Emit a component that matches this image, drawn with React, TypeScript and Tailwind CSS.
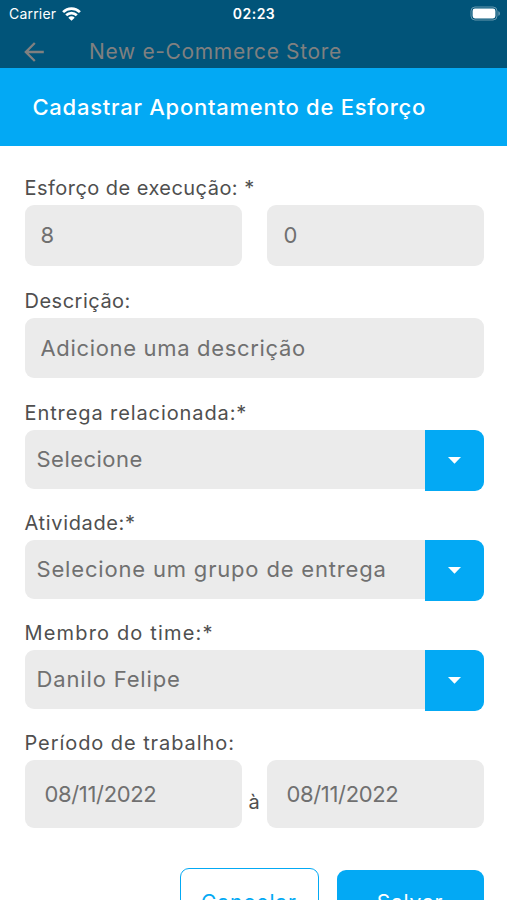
import { useState } from "react";
import type { ReactNode } from "react";

const labelClass = "block h-7 text-[20px] leading-[22px] whitespace-nowrap text-[#4f4f4f]";
const inputClass =
  "block w-full min-w-0 rounded-[9px] bg-[#ebebeb] text-[22px] text-[#707070] placeholder:text-[#707070] outline-none";

interface FieldProps {
  id: string;
  label: string;
  tracking: string;
  children: ReactNode;
}

function Field({ id, label, tracking, children }: FieldProps) {
  return (
    <div>
      <label className={`${labelClass} ${tracking}`} htmlFor={id}>
        {label}
      </label>
      {children}
    </div>
  );
}

interface SelectFieldProps {
  id: string;
  label: string;
  labelTracking: string;
  value: string;
  valueTracking: string;
}

function SelectField({ id, label, labelTracking, value, valueTracking }: SelectFieldProps) {
  return (
    <Field id={id} label={label} tracking={labelTracking}>
      <button id={id} type="button" className="flex h-[61px] w-full items-start text-left">
        <span
          className={`flex h-[58.5px] flex-1 items-center rounded-l-[9px] bg-[#ebebeb] pl-3 text-[22px] whitespace-nowrap text-[#707070] ${valueTracking}`}
        >
          {value}
        </span>
        <span className="flex h-[61px] w-[59px] items-center justify-center rounded-r-[9px] bg-[#03a9f4]">
          <svg width="13" height="7" viewBox="0 0 13 7" fill="white" aria-hidden="true">
            <path d="M0 0h13L6.5 6.8z" />
          </svg>
        </span>
      </button>
    </Field>
  );
}

function StatusBar() {
  return (
    <div className="flex h-[27px] items-center justify-between pr-[6px] pl-[9px] text-white">
      <div className="flex w-[120px] items-center gap-[6px]">
        <span className="text-[14px] tracking-[0.2px]">Carrier</span>
        <svg width="19" height="14" viewBox="0 0 19 14" aria-hidden="true">
          <g fill="none" stroke="white" strokeWidth="2.7">
            <path d="M1.1 5.1a12 12 0 0 1 16.8 0" />
            <path d="M4.2 8.3a7.5 7.5 0 0 1 10.6 0" />
          </g>
          <path d="M6.3 10.7a4.3 4.3 0 0 1 6.4 0L9.5 13.8z" fill="white" />
        </svg>
      </div>
      <span className="pr-0.5 text-[14px] font-semibold tracking-[0.5px]">02:23</span>
      <div className="flex w-[120px] justify-end">
        <svg width="31" height="15" viewBox="0 0 31 15" aria-hidden="true">
          <rect x="1" y="1" width="26" height="13" rx="4" fill="none" stroke="white" strokeOpacity="0.4" />
          <rect x="2.6" y="2.6" width="22.8" height="9.8" rx="2.4" fill="white" />
          <path d="M28.4 5.2c2 .7 2 3.9 0 4.6z" fill="white" fillOpacity="0.45" />
        </svg>
      </div>
    </div>
  );
}

export default function App() {
  const [hours, setHours] = useState("8");
  const [minutes, setMinutes] = useState("0");
  const [description, setDescription] = useState("");
  const [start, setStart] = useState("08/11/2022");
  const [end, setEnd] = useState("08/11/2022");

  return (
    <div className="h-[900px] w-full overflow-hidden bg-white font-['Inter',sans-serif]">
      <header className="h-[68px] bg-[#015479]">
        <StatusBar />
        <div className="flex h-[41px] items-center pt-[9px] pl-6">
          <svg width="20" height="20" viewBox="0 0 20 20" fill="none" stroke="#808080" strokeWidth="2.3" aria-hidden="true">
            <path d="M19.8 10H2M10.8 1L1.8 10l9 9" />
          </svg>
          <span className="ml-[45px] text-[21px] whitespace-nowrap tracking-[0.65px] text-[#808080]">
            New e-Commerce Store
          </span>
        </div>
      </header>

      <h1 className="flex h-[78px] items-center bg-[#03a9f4] pt-px pl-[32.5px] text-[22px] font-medium whitespace-nowrap tracking-[0.74px] text-white">
        Cadastrar Apontamento de Esforço
      </h1>

      <form className="flex flex-col pt-[31px] pr-[23.5px] pl-[24.5px]" onSubmit={(e) => e.preventDefault()}>
        <div className="flex flex-col gap-6">
          <Field id="hours" label="Esforço de execução: *" tracking="tracking-[0.46px]">
            <div className="grid grid-cols-2 gap-[25px]">
              <input
                id="hours"
                className={`${inputClass} h-[60.5px] px-4`}
                value={hours}
                onChange={(e) => setHours(e.target.value)}
              />
              <input
                className={`${inputClass} h-[60.5px] px-[17px]`}
                value={minutes}
                onChange={(e) => setMinutes(e.target.value)}
              />
            </div>
          </Field>

          <Field id="description" label="Descrição:" tracking="tracking-[0.5px]">
            <input
              id="description"
              className={`${inputClass} h-[60.5px] px-4 tracking-[0.67px]`}
              placeholder="Adicione uma descrição"
              value={description}
              onChange={(e) => setDescription(e.target.value)}
            />
          </Field>
        </div>

        <div className="mt-6 flex flex-col gap-[21px]">
          <SelectField
            id="delivery"
            label="Entrega relacionada:*"
            labelTracking="tracking-[0.9px]"
            value="Selecione"
            valueTracking="tracking-[0.48px]"
          />
          <SelectField
            id="activity"
            label="Atividade:*"
            labelTracking="tracking-[0.65px]"
            value="Selecione um grupo de entrega"
            valueTracking="tracking-[0.82px]"
          />
          <SelectField
            id="member"
            label="Membro do time:*"
            labelTracking="tracking-[1.16px]"
            value="Danilo Felipe"
            valueTracking="tracking-[0.85px]"
          />

          <Field id="start" label="Período de trabalho:" tracking="tracking-[0.93px]">
            <div className="flex items-center">
              <input
                id="start"
                className={`${inputClass} h-[68px] flex-1 px-5 tracking-[-0.35px]`}
                value={start}
                onChange={(e) => setStart(e.target.value)}
              />
              <span className="w-[25px] pt-4 text-center text-[20px] leading-6 text-[#4f4f4f]">à</span>
              <input
                className={`${inputClass} h-[68px] flex-1 px-5 tracking-[-0.35px]`}
                value={end}
                onChange={(e) => setEnd(e.target.value)}
              />
            </div>
          </Field>
        </div>

        <div className="mt-10 flex justify-end gap-[18px]">
          <button
            type="button"
            className="h-[70px] w-[139px] rounded-[9px] border-[1.5px] border-[#03a9f4] text-[21px] tracking-[0.9px] text-[#03a9f4]"
          >
            Cancelar
          </button>
          <button
            type="submit"
            className="mt-[1.5px] h-[67px] w-[147px] rounded-[9px] bg-[#03a9f4] text-[21px] tracking-[0.8px] text-white"
          >
            Salvar
          </button>
        </div>
      </form>
    </div>
  );
}
